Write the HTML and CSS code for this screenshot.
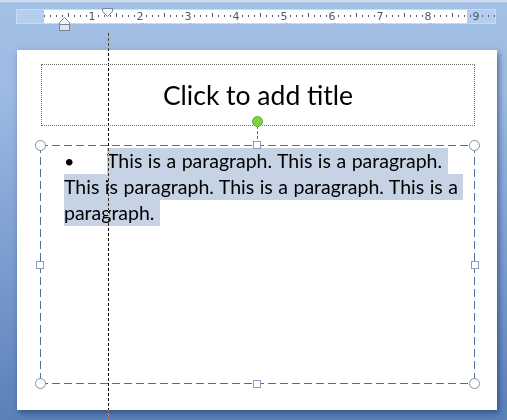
FILE: index.html
```html
<!DOCTYPE html>
<html lang="en">
<head>
    <meta charset="UTF-8">
    <title>Slide editor</title>
    <link rel="stylesheet" href="styles.css">
</head>
<body>
    <div class="window">
        <!-- Ruler -->
        <div class="ruler">
            <div class="ruler-margin"></div>
            <div class="ruler-scale"></div>
            <div class="ruler-margin ruler-margin-right"></div>
            <div class="ruler-ticks"></div>
            <div class="ruler-nums">
                <span>1</span><span>2</span><span>3</span><span>4</span>
                <span>5</span><span>6</span><span>7</span><span>8</span>
                <span class="on-margin">9</span>
            </div>
            <div class="tab-stops">
                <i></i><i></i><i></i><i></i><i></i><i></i><i></i>
            </div>
            <svg class="marker marker-first" width="11" height="9" viewBox="0 0 11 9">
                <path d="M0.5 0.5 H10.5 V3.5 L5.5 8.5 L0.5 3.5 Z" fill="#f4f6f9" stroke="#7b8494"/>
            </svg>
            <svg class="marker marker-hanging" width="11" height="14" viewBox="0 0 11 14">
                <path d="M5.5 0.5 L10.5 5.5 V7.5 H0.5 V5.5 Z" fill="#f4f6f9" stroke="#7b8494"/>
                <rect x="0.5" y="7.5" width="10" height="6" fill="#dfe3ea" stroke="#7b8494"/>
            </svg>
        </div>

        <!-- Slide -->
        <div class="slide">
            <div class="title-box">Click to add title</div>

            <div class="body-box">
                <p class="para">
                    <span class="line"><span class="bullet">•</span><span class="sel">This is a paragraph. This is a paragraph. </span></span>
                    <span class="line"><span class="sel">This is paragraph. This is a paragraph. This is a </span></span>
                    <span class="line"><span class="sel">paragraph. </span></span>
                </p>

                <span class="rotate-stem"></span>
                <span class="rotate-handle"></span>
                <span class="handle corner tl"></span>
                <span class="handle corner tr"></span>
                <span class="handle corner bl"></span>
                <span class="handle corner br"></span>
                <span class="handle side tm"></span>
                <span class="handle side bm"></span>
                <span class="handle side ml"></span>
                <span class="handle side mr"></span>
            </div>
        </div>

        <div class="guide"></div>
    </div>
</body>
</html>
```

FILE: styles.css
```css
body {
    margin: 0;
}
.window {
    position: relative;
    width: 507px;
    height: 420px;
    overflow: hidden;
    padding-top: 9px;
    box-sizing: border-box;
    background: linear-gradient(180deg, #a3c0e6 0, #9dbbe3 90px, #7b9dcf 260px, #5a80ba 420px);
}
.window::before {
    content: "";
    position: absolute;
    left: 0;
    right: 0;
    top: 0;
    height: 2px;
    background: #cddcf0;
    border-bottom: 1px solid #b3c9e8;
}

/* ruler */
.ruler {
    position: relative;
    display: flex;
    margin-left: 16px;
    width: 480px;
    height: 15px;
    border: 1px solid #cbdaf0;
    box-sizing: border-box;
    font-family: "DejaVu Sans", sans-serif;
}
.ruler-margin {
    width: 27px;
    background: #b5cdee;
}
.ruler-margin-right {
    width: 28px;
}
.ruler-scale {
    flex: 1;
    background: #fff;
}
.ruler-ticks {
    position: absolute;
    inset: 0;
    background:
        repeating-linear-gradient(90deg, #565d68 0 1px, transparent 1px 48px) 51px 3px / 100% 4px no-repeat,
        repeating-linear-gradient(90deg, #565d68 0 1px, transparent 1px 6px) 27px 5px / 100% 2px no-repeat;
}
.ruler-nums {
    position: absolute;
    left: 51px;
    top: 0;
    display: flex;
}
.ruler-nums span {
    width: 48px;
    height: 13px;
    display: flex;
    justify-content: center;
    font-size: 11px;
    line-height: 13px;
    color: #4f5766;
    background: linear-gradient(#fff, #fff) center / 8px 100% no-repeat;
}
.ruler-nums span.on-margin {
    background: linear-gradient(#b5cdee, #b5cdee) center / 8px 100% no-repeat;
}
.tab-stops {
    position: absolute;
    left: 124px;
    top: 13px;
    display: flex;
    gap: 45px;
}
.tab-stops i {
    width: 3px;
    height: 4px;
    background: #b6bdc8;
}
.marker {
    position: absolute;
    display: block;
}
.marker-first {
    left: 85px;
    top: -2px;
}
.marker-hanging {
    left: 42px;
    top: 7px;
}

/* slide */
.slide {
    position: relative;
    margin: 26px 0 0 17px;
    width: 480px;
    height: 360px;
    background: #fff;
    box-shadow: 2px 3px 6px rgba(20, 40, 90, 0.55);
    font-family: Lato, "Open Sans", sans-serif;
    padding: 14px 0 0 24px;
    box-sizing: border-box;
}
.title-box {
    width: 434px;
    height: 62px;
    padding-bottom: 1px;
    border: 1px dotted #6f6f6f;
    box-sizing: border-box;
    display: flex;
    align-items: center;
    justify-content: center;
    font-size: 26.5px;
    color: #000;
}
.body-box {
    position: relative;
    margin: 19px 0 0 -1px;
    width: 435px;
    height: 239px;
    box-sizing: border-box;
    padding: 3px 0 0 24px;
    background:
        repeating-linear-gradient(90deg, #4c709d 0 8px, transparent 8px 12px) left top / 100% 1px no-repeat,
        repeating-linear-gradient(90deg, #4c709d 0 8px, transparent 8px 12px) left bottom / 100% 1px no-repeat,
        repeating-linear-gradient(180deg, #4c709d 0 8px, transparent 8px 12px) left top / 1px 100% no-repeat,
        repeating-linear-gradient(180deg, #4c709d 0 8px, transparent 8px 12px) right top / 1px 100% no-repeat;
}
.para {
    margin: 0;
    font-size: 19.5px;
    line-height: 26px;
    word-spacing: 0.5px;
    color: #000;
}
.line {
    display: block;
    height: 26px;
}
.bullet {
    display: inline-block;
    width: 43px;
    font-size: 18px;
}
.sel {
    display: inline-block;
    white-space: pre;
    background: #c6d3e5;
}

/* handles */
.handle {
    position: absolute;
    box-sizing: border-box;
    background: #fff;
}
.corner {
    width: 11px;
    height: 11px;
    border: 1px solid #878f99;
    border-radius: 50%;
}
.side {
    width: 8px;
    height: 8px;
    border: 1px solid #8aa0ba;
}
.tl { left: -5px; top: -5px; }
.tr { right: -5px; top: -5px; }
.bl { left: -5px; bottom: -5px; }
.br { right: -5px; bottom: -5px; }
.tm { left: 213px; top: -4px; }
.bm { left: 213px; bottom: -4px; }
.ml { left: -4px; top: 116px; }
.mr { right: -4px; top: 116px; }
.rotate-handle {
    position: absolute;
    left: 212px;
    top: -29px;
    width: 11px;
    height: 11px;
    box-sizing: border-box;
    border-radius: 50%;
    background: #7ed43f;
    border: 1px solid #63a83a;
}
.rotate-stem {
    position: absolute;
    left: 217px;
    top: -19px;
    width: 1px;
    height: 15px;
    background: repeating-linear-gradient(180deg, #4c709d 0 3px, transparent 3px 5px);
}

/* vertical guide */
.guide {
    position: absolute;
    left: 108px;
    top: 33px;
    bottom: 0;
    width: 1px;
    background: repeating-linear-gradient(180deg, #fff 0 3px, transparent 3px 5px);
    mix-blend-mode: difference;
}
```
